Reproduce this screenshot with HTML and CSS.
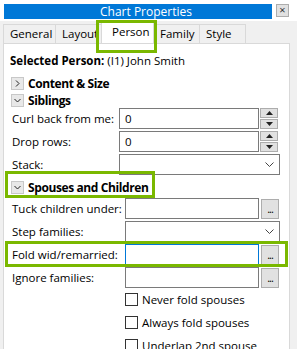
FILE: index.html
```
<!DOCTYPE html>
<html lang="en">
<head>
    <meta charset="UTF-8">
    <title>Chart Properties</title>
    <link rel="stylesheet" href="styles.css">
</head>
<body>
    <div class="dialog">
        <div class="titlebar">
            <div class="title">Chart Properties</div>
            <div class="close">&times;</div>
        </div>

        <div class="tabs">
            <div class="tab tab-general">General</div>
            <div class="tab tab-layout">Layout</div>
            <div class="tab tab-person active">Person</div>
            <div class="tab tab-family">Family</div>
            <div class="tab tab-style">Style</div>
            <div class="hl hl-tab"></div>
        </div>

        <div class="panel">
            <div class="selected"><b>Selected Person:</b> (I1) John Smith</div>

            <div class="section sec-content">
                <span class="expander">
                    <svg width="7" height="7" viewBox="0 0 7 7"><path d="M2 0.5 L5 3.5 L2 6.5" fill="none" stroke="#222" stroke-width="1"/></svg>
                </span>
                <span class="sec-title">Content &amp; Size</span>
            </div>
            <div class="section sec-sib">
                <span class="expander">
                    <svg width="7" height="7" viewBox="0 0 7 7"><path d="M0.5 2 L3.5 5 L6.5 2" fill="none" stroke="#222" stroke-width="1"/></svg>
                </span>
                <span class="sec-title">Siblings</span>
            </div>

            <div class="row">
                <label>Curl back from me:</label>
                <div class="field spin-field">0</div>
                <div class="spin">
                    <div class="spin-btn"><svg width="7" height="4" viewBox="0 0 7 4"><path d="M0 4 L3.5 0 L7 4Z" fill="#222"/></svg></div>
                    <div class="spin-btn"><svg width="7" height="4" viewBox="0 0 7 4"><path d="M0 0 L3.5 4 L7 0Z" fill="#222"/></svg></div>
                </div>
            </div>
            <div class="row">
                <label>Drop rows:</label>
                <div class="field spin-field">0</div>
                <div class="spin">
                    <div class="spin-btn"><svg width="7" height="4" viewBox="0 0 7 4"><path d="M0 4 L3.5 0 L7 4Z" fill="#222"/></svg></div>
                    <div class="spin-btn"><svg width="7" height="4" viewBox="0 0 7 4"><path d="M0 0 L3.5 4 L7 0Z" fill="#222"/></svg></div>
                </div>
            </div>
            <div class="row">
                <label>Stack:</label>
                <div class="field combo">
                    <svg width="9" height="5" viewBox="0 0 9 5"><path d="M0.5 0.5 L4.5 4.5 L8.5 0.5" fill="none" stroke="#444" stroke-width="1"/></svg>
                </div>
            </div>

            <div class="section sec-spouse">
                <span class="expander">
                    <svg width="7" height="7" viewBox="0 0 7 7"><path d="M0.5 2 L3.5 5 L6.5 2" fill="none" stroke="#222" stroke-width="1"/></svg>
                </span>
                <span class="sec-title">Spouses and Children</span>
                <div class="hl hl-spouse"></div>
            </div>

            <div class="group2">
                <div class="row">
                    <label>Tuck children under:</label>
                    <div class="field text-field"></div>
                    <div class="dots">...</div>
                </div>
                <div class="row">
                    <label>Step families:</label>
                    <div class="field combo">
                        <svg width="9" height="5" viewBox="0 0 9 5"><path d="M0.5 0.5 L4.5 4.5 L8.5 0.5" fill="none" stroke="#444" stroke-width="1"/></svg>
                    </div>
                </div>
                <div class="row row-fold">
                    <label>Fold wid/remarried:</label>
                    <div class="field text-field focused"></div>
                    <div class="dots">...</div>
                    <div class="hl hl-fold"></div>
                </div>
                <div class="row">
                    <label>Ignore families:</label>
                    <div class="field text-field"></div>
                    <div class="dots">...</div>
                </div>

                <div class="checks">
                    <div class="check"><span class="box"></span>Never fold spouses</div>
                    <div class="check"><span class="box"></span>Always fold spouses</div>
                    <div class="check"><span class="box"></span>Underlap 2nd spouse</div>
                </div>
            </div>
        </div>
    </div>
</body>
</html>
```

FILE: styles.css
```
body {
    margin: 0;
    background: #f0f0f0;
    font-family: 'Open Sans', 'Noto Sans', sans-serif;
    font-size: 11.5px;
    color: #000;
    overflow: hidden;
}

.dialog {
    width: 297px;
    height: 349px;
    position: relative;
}

.titlebar {
    display: flex;
    align-items: center;
    height: 21px;
    padding: 0 8px 0 4px;
    background: #fff;
}

.title {
    flex: 1;
    height: 15px;
    margin-top: 1px;
    background: #0078d7;
    color: #fff;
    font-size: 12px;
    line-height: 15px;
    text-align: center;
    padding-left: 16px;
}

.close {
    width: 11px;
    height: 11px;
    margin-left: 4px;
    border: 1px solid #adadad;
    background: #e1e1e1;
    font-size: 11px;
    line-height: 10px;
    text-align: center;
    color: #333;
}

.tabs {
    display: flex;
    padding: 2px 0 0 3px;
    height: 20px;
    position: relative;
    z-index: 1;
}

.tab {
    height: 19px;
    margin-top: 1px;
    background: #f0f0f0;
    border: 1px solid #d9d9d9;
    border-bottom: none;
    margin-right: -1px;
    padding: 0 6px;
    line-height: 18px;
    box-sizing: border-box;
}

.tab-general { width: 53px; }
.tab-layout { width: 47px; }
.tab-person { width: 53px; }
.tab-family { width: 47px; }
.tab-style { width: 47px; }

.tab.active {
    background: #fff;
    height: 22px;
    margin-top: -2px;
    padding-top: 1px;
    padding-left: 10px;
}

.panel {
    margin-left: 3px;
    width: 287px;
    height: 320px;
    background: #fff;
    border: 1px solid #d9d9d9;
    padding-left: 6px;
    box-sizing: border-box;
    position: relative;
}

.selected {
    margin-top: 9px;
    height: 16px;
    line-height: 16px;
}

.section {
    display: flex;
    align-items: center;
    height: 16px;
    position: relative;
}

.sec-title {
    font-weight: 700;
    font-size: 12px;
    letter-spacing: -0.4px;
    white-space: nowrap;
}

.sec-content {
    margin-top: 6px;
}

.sec-sib {
    margin-top: 1px;
}

.expander {
    width: 11px;
    height: 11px;
    margin: 0 4px 0 1px;
    border: 1px solid #c8c8c8;
    background: #e8e8e8;
    display: flex;
    align-items: center;
    justify-content: center;
}

.row {
    display: flex;
    align-items: center;
    height: 21px;
    margin-top: 2px;
    position: relative;
}

.sec-sib + .row {
    margin-top: 0;
}

.row label {
    width: 107px;
    padding-left: 2px;
}

.field {
    height: 21px;
    border: 1px solid #7a7a7a;
    box-sizing: border-box;
    background: #fff;
}

.spin-field {
    width: 140px;
    padding-left: 5px;
    line-height: 19px;
}

.spin {
    width: 18px;
    height: 21px;
    margin-left: 1px;
    display: flex;
    flex-direction: column;
    gap: 1px;
}

.spin-btn {
    flex: 1;
    border: 1px solid #adadad;
    background: #e1e1e1;
    display: flex;
    align-items: center;
    justify-content: center;
}

.combo {
    width: 161px;
    display: flex;
    align-items: center;
    justify-content: flex-end;
    padding-right: 5px;
}

.sec-spouse {
    margin-top: 4px;
    height: 16px;
}

.group2 .row label {
    width: 113px;
}

.group2 .row:first-child {
    margin-top: 3px;
}

.group2 .combo {
    width: 155px;
}

.text-field {
    width: 134px;
}

.text-field.focused {
    border-color: #0078d7;
}

.dots {
    width: 18px;
    height: 20px;
    margin-left: 2px;
    border: 1px solid #adadad;
    background: #e1e1e1;
    box-sizing: border-box;
    font-size: 11px;
    line-height: 18px;
    text-align: center;
    letter-spacing: -1px;
}

.checks {
    margin-left: 115px;
}

.check {
    display: flex;
    align-items: center;
    height: 23px;
}

.box {
    width: 11px;
    height: 11px;
    border: 1px solid #333;
    background: #fff;
    margin-right: 4px;
}

.hl {
    position: absolute;
    border: 3px solid #7ab800;
    box-sizing: border-box;
    pointer-events: none;
}

.hl-tab {
    left: 96px;
    top: -1px;
    width: 61px;
    height: 33px;
}

.hl-spouse {
    left: -5px;
    top: -8px;
    width: 150px;
    height: 27px;
}

.hl-fold {
    left: -5px;
    top: -3px;
    width: 283px;
    height: 26px;
}
```
